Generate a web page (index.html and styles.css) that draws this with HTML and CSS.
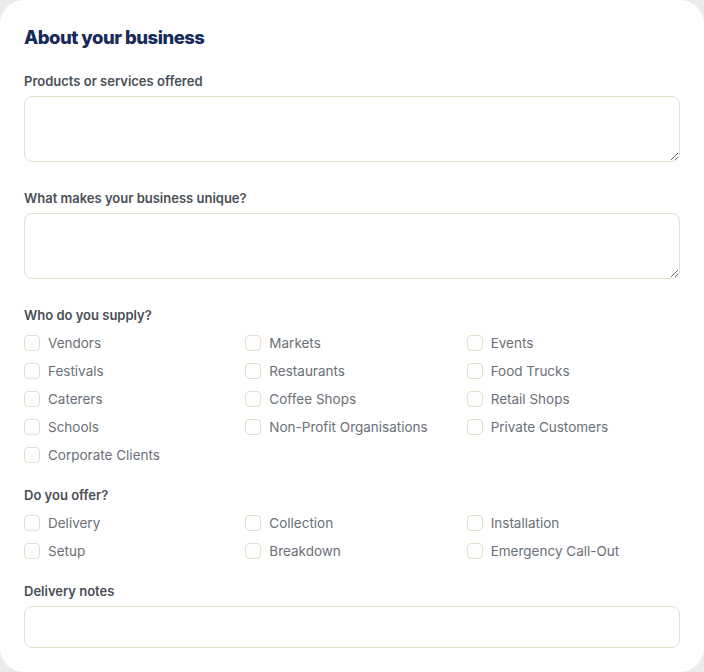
FILE: index.html
```html
<!DOCTYPE html>
<html lang="en">
<head>
<meta charset="utf-8">
<title>About your business</title>
<link rel="stylesheet" href="styles.css">
</head>
<body>
<form class="card">
  <h2 class="title">About your business</h2>

  <div class="field">
    <label class="label" for="products">Products or services offered</label>
    <textarea id="products" class="textarea"></textarea>
  </div>

  <div class="field">
    <label class="label" for="unique">What makes your business unique?</label>
    <textarea id="unique" class="textarea"></textarea>
  </div>

  <div class="field">
    <div class="label">Who do you supply?</div>
    <div class="options">
      <label class="option"><span class="box"></span>Vendors</label>
      <label class="option"><span class="box"></span>Markets</label>
      <label class="option"><span class="box"></span>Events</label>
      <label class="option"><span class="box"></span>Festivals</label>
      <label class="option"><span class="box"></span>Restaurants</label>
      <label class="option"><span class="box"></span>Food Trucks</label>
      <label class="option"><span class="box"></span>Caterers</label>
      <label class="option"><span class="box"></span>Coffee Shops</label>
      <label class="option"><span class="box"></span>Retail Shops</label>
      <label class="option"><span class="box"></span>Schools</label>
      <label class="option"><span class="box"></span>Non-Profit Organisations</label>
      <label class="option"><span class="box"></span>Private Customers</label>
      <label class="option"><span class="box"></span>Corporate Clients</label>
    </div>
  </div>

  <div class="field">
    <div class="label">Do you offer?</div>
    <div class="options">
      <label class="option"><span class="box"></span>Delivery</label>
      <label class="option"><span class="box"></span>Collection</label>
      <label class="option"><span class="box"></span>Installation</label>
      <label class="option"><span class="box"></span>Setup</label>
      <label class="option"><span class="box"></span>Breakdown</label>
      <label class="option"><span class="box"></span>Emergency Call-Out</label>
    </div>
  </div>

  <div class="field">
    <label class="label" for="notes">Delivery notes</label>
    <input id="notes" class="input" type="text">
  </div>
</form>
</body>
</html>
```

FILE: styles.css
```css
* { box-sizing: border-box; }

html, body {
  margin: 0;
  padding: 0;
  background: #ebebeb;
}

body {
  font-family: Inter, "Noto Sans", sans-serif;
}

.card {
  width: 704px;
  height: 672px;
  background: #ffffff;
  border-radius: 24px;
  padding: 24px 24px 0 24px;
  display: flex;
  flex-direction: column;
  gap: 20px;
}

.title {
  margin: 0;
  font-size: 18.5px;
  line-height: 27px;
  font-weight: 800;
  letter-spacing: -0.5px;
  color: #172a5a;
}

.field {
  display: flex;
  flex-direction: column;
}

.label {
  font-size: 13px;
  line-height: 20px;
  font-weight: 600;
  color: #4a4f57;
  margin-bottom: 5px;
}

.textarea {
  display: block;
  width: 656px;
  height: 66px;
  margin: 0 0 6px 0;
  border: 1px solid #e7dfcb;
  border-radius: 8px;
  background: #ffffff;
  font-family: inherit;
  resize: vertical;
}

.input {
  display: block;
  width: 656px;
  height: 42px;
  margin: 0;
  border: 1px solid #e7dfcb;
  border-radius: 8px;
  background: #ffffff;
  font-family: inherit;
}

.options {
  display: grid;
  grid-template-columns: repeat(3, 1fr);
  column-gap: 8px;
  row-gap: 8px;
  margin-top: 3px;
}

.option {
  display: flex;
  align-items: center;
  gap: 8px;
  font-size: 13.5px;
  line-height: 20px;
  color: #6b7078;
}

.box {
  width: 16px;
  height: 16px;
  flex: none;
  border: 1px solid #e7dfcb;
  border-radius: 4px;
  background: #ffffff;
}
```
